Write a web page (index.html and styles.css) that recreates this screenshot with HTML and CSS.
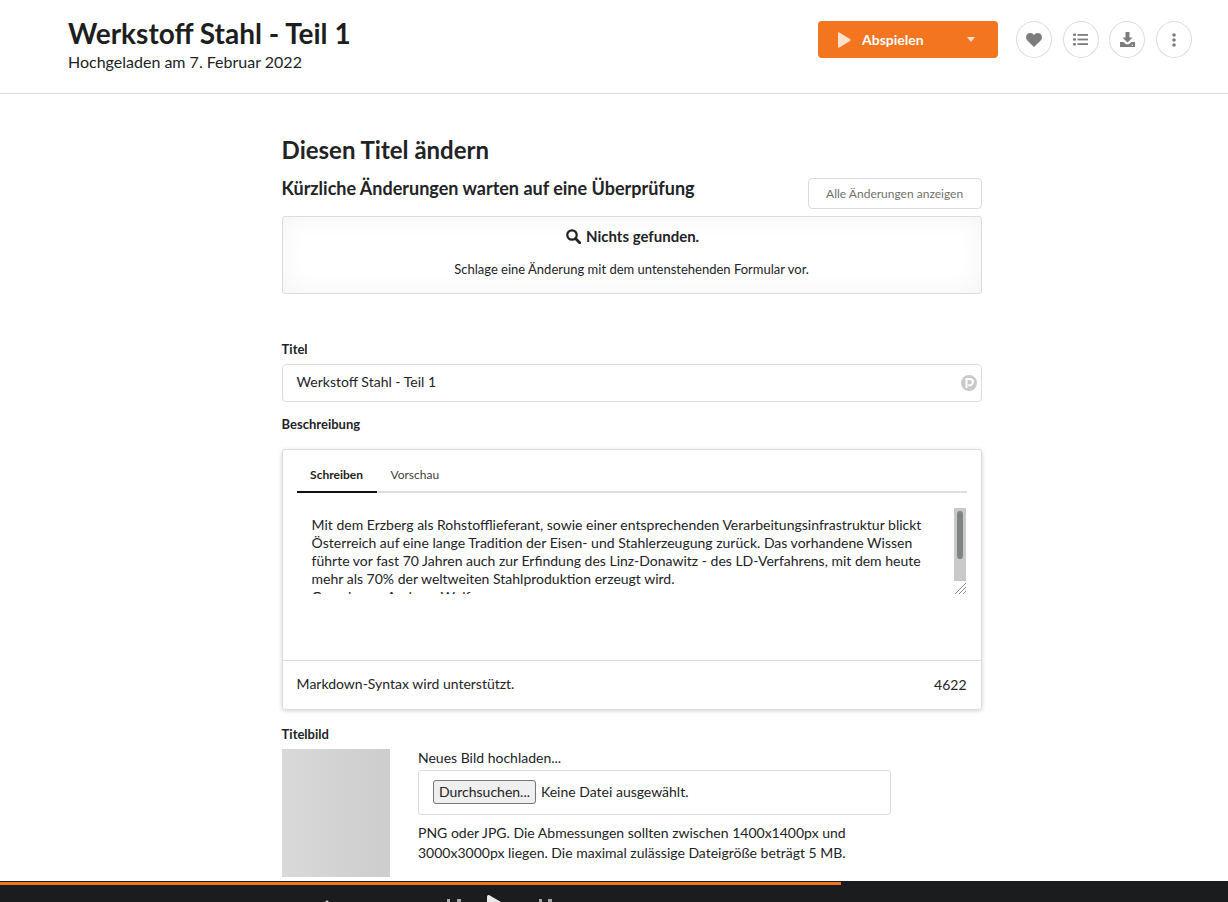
FILE: index.html
```html
<!DOCTYPE html>
<html lang="de">
<head>
<meta charset="utf-8">
<title>Werkstoff Stahl - Teil 1</title>
<link rel="stylesheet" href="styles.css">
</head>
<body>
<header class="top">
  <div class="top-text">
    <h1>Werkstoff Stahl - Teil 1</h1>
    <p>Hochgeladen am 7. Februar 2022</p>
  </div>
  <div class="actions">
    <button class="play" type="button">
      <svg class="play-ico" width="14" height="16" viewBox="0 0 14 16"><path d="M1 1.200c0-.9.6-1.200 1.300-.8l10.700 6.600c.8.500.8 1.500 0 2L2.300 15.600c-.7.400-1.300.1-1.300-.8z" fill="#fde0cc"/></svg>
      <span class="play-label">Abspielen</span>
      <svg class="caret" width="8" height="5" viewBox="0 0 8 5"><path d="M0 0h8L4 5z" fill="#fde0cc"/></svg>
    </button>
    <button class="round" type="button" aria-label="Favorit">
      <svg width="16" height="14" viewBox="0 0 16 14"><path d="M8 14 1.300 7.400C-.4 5.700-.4 3 1.200 1.300 2.900-.4 5.600-.4 7.300 1.200l.7.700.7-.7c1.700-1.600 4.400-1.600 6.100.1 1.600 1.700 1.600 4.400-.1 6.100z" fill="#7d7d7d"/></svg>
    </button>
    <button class="round" type="button" aria-label="Liste">
      <svg width="15" height="13" viewBox="0 0 15 13" fill="#7d7d7d"><rect x="0" y="0.500" width="3" height="2.600" rx="1"/><rect x="0" y="5.200" width="3" height="2.600" rx="1"/><rect x="0" y="9.900" width="3" height="2.600" rx="1"/><rect x="4.500" y="1" width="10.500" height="1.800"/><rect x="4.500" y="5.600" width="10.500" height="1.800"/><rect x="4.500" y="10.200" width="10.500" height="1.800"/></svg>
    </button>
    <button class="round" type="button" aria-label="Herunterladen">
      <svg width="15" height="15" viewBox="0 0 15 15"><path d="M5.500 0h4v5.500h3L7.500 10.500l-5-5h3z" fill="#7d7d7d"/><path d="M0 10h3.500l2.500 2.200h3L11.500 10H15v5H0z" fill="#7d7d7d"/><rect x="11.600" y="12.700" width="1.400" height="1" fill="#fff"/></svg>
    </button>
    <button class="round" type="button" aria-label="Mehr">
      <svg width="4" height="14" viewBox="0 0 4 14" fill="#7d7d7d"><circle cx="2" cy="2" r="1.800"/><circle cx="2" cy="7" r="1.800"/><circle cx="2" cy="12" r="1.800"/></svg>
    </button>
  </div>
</header>

<main class="page">
  <h2>Diesen Titel ändern</h2>
  <div class="recent">
    <h3>Kürzliche Änderungen warten auf eine Überprüfung</h3>
    <button class="all" type="button">Alle Änderungen anzeigen</button>
  </div>
  <section class="empty">
    <div class="empty-title">
      <svg width="15" height="15" viewBox="0 0 15 15"><circle cx="6" cy="6" r="4.700" fill="none" stroke="#222" stroke-width="2.300"/><path d="m9.500 9.500 4.200 4.200" stroke="#222" stroke-width="2.800" stroke-linecap="round"/></svg>
      <span>Nichts gefunden.</span>
    </div>
    <p>Schlage eine Änderung mit dem untenstehenden Formular vor.</p>
  </section>

  <label class="lbl lbl-title">Titel</label>
  <div class="input">
    <span class="input-text">Werkstoff Stahl - Teil 1</span>
    <svg class="pw" width="16" height="16" viewBox="0 0 16 16"><circle cx="8" cy="8" r="8" fill="#c9c9c9"/><path d="M5.500 13V4h3.300a3 3 0 0 1 0 6.200H7.300" fill="none" stroke="#fff" stroke-width="2"/></svg>
  </div>

  <label class="lbl lbl-desc">Beschreibung</label>
  <section class="card">
    <div class="card-body">
      <div class="tabs">
        <span class="tab tab-on">Schreiben</span>
        <span class="tab">Vorschau</span>
      </div>
      <div class="editor">
        <textarea class="area" readonly>Mit dem Erzberg als Rohstofflieferant, sowie einer entsprechenden Verarbeitungsinfrastruktur blickt Österreich auf eine lange Tradition der Eisen- und Stahlerzeugung zurück. Das vorhandene Wissen führte vor fast 70 Jahren auch zur Erfindung des Linz-Donawitz - des LD-Verfahrens, mit dem heute mehr als 70% der weltweiten Stahlproduktion erzeugt wird.
Gemeinsam Andreas Wolf</textarea>
        <div class="scroll">
          <div class="track"><div class="thumb-bar"></div></div>
          <svg class="grip" width="11" height="11" viewBox="0 0 11 11" fill="none" stroke="#8c8c8c" stroke-width="1"><path d="M0 11 11 0M4 11l7-7M8 11l3-3"/></svg>
        </div>
      </div>
    </div>
    <div class="card-foot">
      <span class="foot-note">Markdown-Syntax wird unterstützt.</span>
      <span>4622</span>
    </div>
  </section>

  <label class="lbl lbl-img">Titelbild</label>
  <div class="cover">
    <div class="thumb"></div>
    <div class="upload">
      <div class="upload-lbl">Neues Bild hochladen...</div>
      <div class="file">
        <button class="browse" type="button">Durchsuchen...</button>
        <span>Keine Datei ausgewählt.</span>
      </div>
      <p>PNG oder JPG. Die Abmessungen sollten zwischen 1400x1400px und 3000x3000px liegen. Die maximal zulässige Dateigröße beträgt 5 MB.</p>
    </div>
  </div>
</main>

<footer class="player">
  <div class="progress"></div>
  <svg class="ctl ctl-a" width="4" height="2" viewBox="0 0 4 2"><path d="M2 0 4 2H0z" fill="#bdbdbd"/></svg>
  <svg class="ctl ctl-b" width="16" height="3" viewBox="0 0 16 3" fill="#a8a8a8"><rect x="0" y="0" width="3" height="3"/><rect x="10" y="0" width="4" height="3"/></svg>
  <svg class="ctl ctl-c" width="18" height="7" viewBox="0 0 18 7"><path d="M0 7V2C0 .3 1.300-.4 2.800.4L14 7z" fill="#e8e8e8"/></svg>
  <svg class="ctl ctl-d" width="14" height="3" viewBox="0 0 14 3" fill="#a8a8a8"><rect x="0" y="0" width="3" height="3"/><rect x="9" y="0" width="4" height="3"/></svg>
</footer>
</body>
</html>
```

FILE: styles.css
```css
* { box-sizing: border-box; }
html, body { margin: 0; padding: 0; height: 100%; overflow: hidden; }
body { font-family: Lato, "Noto Sans", sans-serif; color: #222326; background: #fff; font-size: 14px; }
button { font-family: inherit; }

.top { height: 94px; border-bottom: 1px solid #dedede; display: flex; justify-content: space-between; padding: 0 36px 0 68px; }
.top-text { padding-top: 16px; }
.top-text h1 { margin: 0; font-size: 28px; line-height: 34px; font-weight: 700; color: #1d1e20; }
.top-text p { margin: 2px 0 0; font-size: 16px; line-height: 20px; color: #222326; }
.actions { display: flex; align-items: flex-start; padding-top: 21px; }
.play { width: 180px; height: 37px; background: #f4751f; border: 0; border-radius: 4px; display: flex; align-items: center; padding: 0 23px 0 19px; color: #fff; font-size: 14px; font-weight: 700; margin-right: 18px; }
.play-label { margin-left: 11px; flex: 1; text-align: left; }
.round { width: 36px; height: 37px; border: 1px solid #dcdcdc; border-radius: 50%; background: #fff; margin-right: 10.670px; padding: 0; display: flex; align-items: center; justify-content: center; }
.round:last-child { margin-right: 0; }

.page { width: 700px; margin-left: 281.600px; padding-top: 41px; }
h2 { margin: 0; font-size: 24px; line-height: 29px; font-weight: 700; color: #222326; }
.recent { display: flex; justify-content: space-between; align-items: flex-start; margin-top: 13px; }
h3 { margin: 0; font-size: 18px; line-height: 22px; font-weight: 700; color: #222326; }
.all { width: 174px; height: 31px; margin-top: 1px; background: #fff; border: 1px solid #dcdcdc; border-radius: 4px; color: #6f6f6f; font-size: 12px; padding: 0; }

.empty { height: 78px; margin-top: 7px; border: 1px solid #dcdcdc; border-radius: 3px; box-shadow: inset 0 0 24px #f3f3f3; text-align: center; padding-top: 9px; }
.empty-title { display: flex; justify-content: center; align-items: center; gap: 5px; padding-left: 2px; font-size: 15px; line-height: 20px; font-weight: 700; }
.empty p { margin: 14px 0 0; font-size: 13px; line-height: 18px; }

.lbl { display: block; font-size: 13px; line-height: 16px; font-weight: 700; color: #222326; }
.lbl-title { margin-top: 47px; }
.input { height: 38px; margin-top: 7px; border: 1px solid #dcdcdc; border-radius: 4px; display: flex; align-items: center; justify-content: space-between; padding: 0 4px 0 14px; font-size: 14px; }
.input-text { padding-bottom: 4px; }
.lbl-desc { margin-top: 14px; }

.card { height: 261px; margin-top: 17px; border: 1px solid #dcdcdc; border-radius: 3px; box-shadow: 0 1px 4px rgba(0,0,0,.18); display: flex; flex-direction: column; }
.card-body { flex: 1; padding: 7px 14px 0; }
.tabs { display: flex; height: 36px; border-bottom: 2px solid #dedede; }
.tab { height: 36px; padding: 0 14px 0 13.500px; line-height: 35px; font-size: 12px; color: #3d3d3d; }
.tab-on { font-weight: 700; color: #1d1e20; border-bottom: 2px solid #111; }
.editor { display: flex; height: 86px; margin-top: 15px; }
.area { display: block; flex: 1; min-width: 0; height: 86px; border: 0; outline: 0; padding: 8px 0 0 15px; font-family: inherit; font-size: 14px; line-height: 18px; color: #222326; resize: none; overflow: hidden; background: #fff; }
.scroll { width: 13px; display: flex; flex-direction: column; padding-right: 1px; }
.track { width: 12px; height: 73px; background: #c9c9c9; padding: 3px 3px 0; }
.thumb-bar { width: 6px; height: 48px; background: #7f8484; border-radius: 3px; }
.grip { margin: 2px 0 0 1px; }
.card-foot { height: 49px; border-top: 1px solid #dcdcdc; display: flex; justify-content: space-between; align-items: center; padding: 0 14px 2px; font-size: 14px; }
.foot-note { padding-bottom: 2px; }

.lbl-img { margin-top: 16px; }
.cover { display: flex; margin-top: 7px; }
.thumb { width: 108px; height: 128px; background: linear-gradient(90deg, #d9d9d9, #cdcdcd); }
.upload { width: 473px; margin-left: 28.400px; }
.upload-lbl { font-size: 14px; line-height: 18px; }
.file { height: 45px; margin-top: 3px; border: 1px solid #dcdcdc; border-radius: 3px; display: flex; align-items: center; padding: 0 0 2px 14px; font-size: 14px; }
.browse { width: 103px; height: 24px; background: #efefef; border: 1px solid #767676; border-radius: 3px; font-size: 14px; color: #222; padding: 0; margin-right: 5px; }
.upload p { margin: 8px 0 0; font-size: 14px; line-height: 20px; }

.player { position: fixed; left: 0; right: 0; bottom: 0; height: 21px; background: #1b1c1e; overflow: hidden; }
.progress { width: 841px; height: 3px; margin-top: 1px; background: #f4751f; }
.ctl { position: absolute; bottom: 0; }
.ctl-a { left: 325px; }
.ctl-b { left: 447px; }
.ctl-c { left: 487px; }
.ctl-d { left: 539px; }
```
